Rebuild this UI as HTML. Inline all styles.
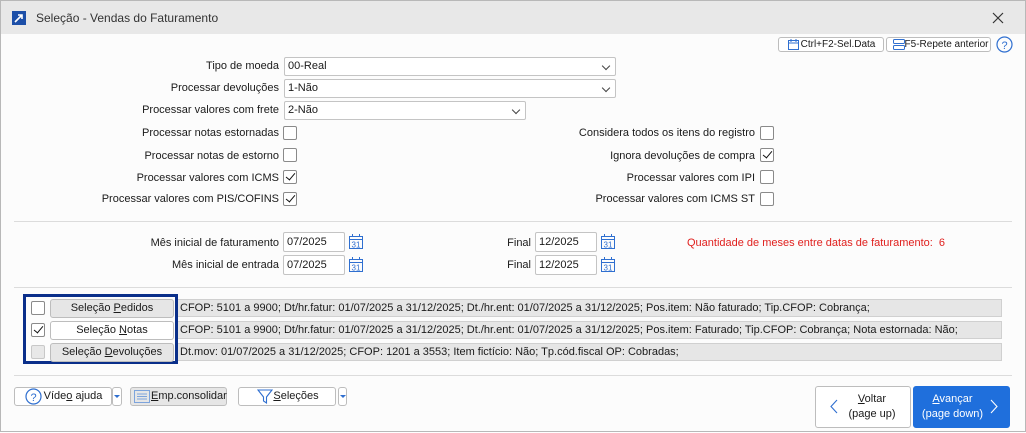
<!DOCTYPE html>
<html><head><meta charset="utf-8"><style>
*{box-sizing:border-box}
body{margin:0;width:1026px;height:433px;overflow:hidden;background:#fff;font-family:"Liberation Sans",sans-serif;font-size:11px;color:#1a1a1a;position:relative}
.a{position:absolute}
.win{left:0;top:0;width:1026px;height:432px;border:1px solid #b8b8b8;background:#fcfcfc}
.tb{left:1px;top:1px;width:1024px;height:33px;background:#e8e8e8}
.lbl{position:absolute;text-align:right;white-space:nowrap;line-height:20px}
.sel{position:absolute;height:19px;border:1px solid #c4c4c4;background:#fff;padding-left:3px;line-height:17px;border-radius:2px}
.sel:after{content:"";position:absolute;right:6px;top:5px;width:5px;height:5px;border-right:1.3px solid #444;border-bottom:1.3px solid #444;transform:rotate(45deg)}
.cb{position:absolute;width:14px;height:14px;border:1px solid #8a8a8a;border-radius:2px;background:#fff}
.cb.k:after{content:"";position:absolute;left:4px;top:0px;width:4px;height:8px;border-right:1.6px solid #111;border-bottom:1.6px solid #111;transform:rotate(40deg)}
.inp{position:absolute;height:20px;width:62px;border:1px solid #c4c4c4;background:#fff;padding-left:3px;line-height:18px;border-radius:2px}
.hr{position:absolute;height:1px;background:#dcdcdc}
.btn{position:absolute;border:1px solid #bdbdbd;border-radius:3px;background:#fff;text-align:center;line-height:16px;white-space:nowrap}
.bar{position:absolute;left:177px;width:825px;height:18px;background:#e6e6e6;border:1px solid #d0d0d0;padding-left:2px;line-height:16px;white-space:nowrap;overflow:hidden}
u{text-decoration:underline}
</style></head><body>
<div class="a win"></div>
<div class="a tb"></div>
<div class="a" style="left:12px;top:11px;width:14px;height:14px;background:#1c4fa8"><svg width="14" height="14"><path d="M3 11 L10 4 M6 4 H10 V8" stroke="#fff" stroke-width="1.6" fill="none"/></svg></div>
<div class="a" style="left:36px;top:11px;font-size:12px;color:#333">Seleção - Vendas do Faturamento</div>
<svg class="a" style="left:992px;top:12px" width="12" height="12"><path d="M1 1L11 11M11 1L1 11" stroke="#333" stroke-width="1.2"/></svg>

<div class="btn" style="left:778px;top:37px;width:106px;height:15px;line-height:13px;font-size:10px;padding-left:14px">Ctrl+F2-Sel.Data</div>
<svg class="a" style="left:788px;top:39px" width="11" height="11"><rect x="0.5" y="1.5" width="10" height="9" fill="none" stroke="#2f6fd0"/><path d="M0.5 4H10.5M3 0V3M8 0V3" stroke="#2f6fd0"/></svg>
<div class="btn" style="left:886px;top:37px;width:105px;height:15px;line-height:13px;font-size:10px;padding-left:16px">F5-Repete anterior</div>
<svg class="a" style="left:893px;top:39px" width="12" height="11"><rect x="0.5" y="0.5" width="11" height="4" rx="1" fill="none" stroke="#2f6fd0"/><rect x="0.5" y="6.5" width="11" height="4" rx="1" fill="none" stroke="#2f6fd0"/></svg>
<svg class="a" style="left:996px;top:36px" width="17" height="17"><circle cx="8.5" cy="8.5" r="7.5" fill="none" stroke="#2f6fd0" stroke-width="1.2"/><text x="8.5" y="13" font-size="11" text-anchor="middle" fill="#2f6fd0" font-family="Liberation Sans">?</text></svg>

<div class="lbl" style="right:747px;top:56px">Tipo de moeda</div>
<div class="sel" style="left:284px;top:57px;width:332px">00-Real</div>
<div class="lbl" style="right:747px;top:78px">Processar devoluções</div>
<div class="sel" style="left:284px;top:79px;width:332px">1-Não</div>
<div class="lbl" style="right:747px;top:100px">Processar valores com frete</div>
<div class="sel" style="left:284px;top:101px;width:242px">2-Não</div>

<div class="lbl" style="right:747px;top:123px">Processar notas estornadas</div><div class="cb" style="left:283px;top:126px"></div>
<div class="lbl" style="right:747px;top:146px">Processar notas de estorno</div><div class="cb" style="left:283px;top:148px"></div>
<div class="lbl" style="right:747px;top:168px">Processar valores com ICMS</div><div class="cb k" style="left:283px;top:170px"></div>
<div class="lbl" style="right:747px;top:189px">Processar valores com PIS/COFINS</div><div class="cb k" style="left:283px;top:192px"></div>

<div class="lbl" style="right:271px;top:123px">Considera todos os itens do registro</div><div class="cb" style="left:760px;top:126px"></div>
<div class="lbl" style="right:271px;top:146px">Ignora devoluções de compra</div><div class="cb k" style="left:760px;top:148px"></div>
<div class="lbl" style="right:271px;top:168px">Processar valores com IPI</div><div class="cb" style="left:760px;top:170px"></div>
<div class="lbl" style="right:271px;top:189px">Processar valores com ICMS ST</div><div class="cb" style="left:760px;top:192px"></div>

<div class="hr" style="left:14px;top:221px;width:998px"></div>

<div class="lbl" style="right:747px;top:233px">Mês inicial de faturamento</div><div class="inp" style="left:283px;top:232px">07/2025</div>
<div class="lbl" style="right:747px;top:255px">Mês inicial de entrada</div><div class="inp" style="left:283px;top:255px">07/2025</div>
<div class="lbl" style="right:495px;top:233px">Final</div><div class="inp" style="left:535px;top:232px">12/2025</div>
<div class="lbl" style="right:495px;top:255px">Final</div><div class="inp" style="left:535px;top:255px">12/2025</div>
<svg class="a" style="left:349px;top:234px" width="14" height="15"><rect x="0.5" y="2.5" width="13" height="12" fill="none" stroke="#2f6fd0"/><path d="M0.5 5.5H13.5M3.5 0V3M10.5 0V3" stroke="#2f6fd0"/><text x="7" y="13.5" font-size="8" text-anchor="middle" fill="#2f6fd0" font-family="Liberation Sans">31</text></svg>
<svg class="a" style="left:349px;top:257px" width="14" height="15"><rect x="0.5" y="2.5" width="13" height="12" fill="none" stroke="#2f6fd0"/><path d="M0.5 5.5H13.5M3.5 0V3M10.5 0V3" stroke="#2f6fd0"/><text x="7" y="13.5" font-size="8" text-anchor="middle" fill="#2f6fd0" font-family="Liberation Sans">31</text></svg>
<svg class="a" style="left:601px;top:234px" width="14" height="15"><rect x="0.5" y="2.5" width="13" height="12" fill="none" stroke="#2f6fd0"/><path d="M0.5 5.5H13.5M3.5 0V3M10.5 0V3" stroke="#2f6fd0"/><text x="7" y="13.5" font-size="8" text-anchor="middle" fill="#2f6fd0" font-family="Liberation Sans">31</text></svg>
<svg class="a" style="left:601px;top:257px" width="14" height="15"><rect x="0.5" y="2.5" width="13" height="12" fill="none" stroke="#2f6fd0"/><path d="M0.5 5.5H13.5M3.5 0V3M10.5 0V3" stroke="#2f6fd0"/><text x="7" y="13.5" font-size="8" text-anchor="middle" fill="#2f6fd0" font-family="Liberation Sans">31</text></svg>
<div class="lbl" style="left:687px;top:233px;color:#e0201e">Quantidade de meses entre datas de faturamento:&nbsp; 6</div>

<div class="hr" style="left:14px;top:287px;width:998px"></div>
<div class="bar" style="top:299px">CFOP: 5101 a 9900; Dt/hr.fatur: 01/07/2025 a 31/12/2025; Dt./hr.ent: 01/07/2025 a 31/12/2025; Pos.item: Não faturado; Tip.CFOP: Cobrança;</div>
<div class="bar" style="top:321px">CFOP: 5101 a 9900; Dt/hr.fatur: 01/07/2025 a 31/12/2025; Dt./hr.ent: 01/07/2025 a 31/12/2025; Pos.item: Faturado; Tip.CFOP: Cobrança; Nota estornada: Não;</div>
<div class="bar" style="top:343px">Dt.mov: 01/07/2025 a 31/12/2025; CFOP: 1201 a 3553; Item fictício: Não; Tp.cód.fiscal OP: Cobradas;</div>
<div class="a" style="left:23px;top:294px;width:155px;height:70px;border:3px solid #0a2f8a"></div>
<div class="cb" style="left:31px;top:301px"></div>
<div class="btn" style="left:50px;top:299px;width:124px;height:19px;background:#e6e6e6">Seleção <u>P</u>edidos</div>
<div class="cb k" style="left:31px;top:323px"></div>
<div class="btn" style="left:50px;top:321px;width:124px;height:19px">Seleção <u>N</u>otas</div>
<div class="cb" style="left:31px;top:345px;background:#e8e8e8;border-color:#c8c8c8"></div>
<div class="btn" style="left:50px;top:343px;width:124px;height:19px;background:#e6e6e6">Seleção <u>D</u>evoluções</div>

<div class="hr" style="left:14px;top:375px;width:998px"></div>
<div class="btn" style="left:14px;top:387px;width:98px;height:19px;padding-left:20px">Víde<u>o</u> ajuda</div>
<svg class="a" style="left:25px;top:388px" width="17" height="17"><circle cx="8.5" cy="8.5" r="7.5" fill="none" stroke="#2f6fd0" stroke-width="1.2"/><text x="8.5" y="13" font-size="11" text-anchor="middle" fill="#2f6fd0" font-family="Liberation Sans">?</text></svg>
<div class="btn" style="left:112px;top:387px;width:10px;height:19px"><div style="margin:7px auto 0;width:0;height:0;border-left:3px solid transparent;border-right:3px solid transparent;border-top:3px solid #2f6fd0"></div></div>
<div class="btn" style="left:130px;top:387px;width:97px;height:19px;background:#e6e6e6;padding-left:20px"><u>E</u>mp.consolidar</div>
<svg class="a" style="left:134px;top:390px" width="16" height="13"><rect x="0.5" y="0.5" width="15" height="12" fill="none" stroke="#7da4dc"/><path d="M3 4H13M3 6.5H13M3 9H13" stroke="#7da4dc"/></svg>
<div class="btn" style="left:238px;top:387px;width:98px;height:19px;padding-left:18px"><u>S</u>eleções</div>
<svg class="a" style="left:257px;top:388px" width="16" height="17"><path d="M1 2H15L9.5 9V15L6.5 13V9Z" fill="none" stroke="#2f6fd0" stroke-width="1.1"/></svg>
<div class="btn" style="left:338px;top:387px;width:9px;height:19px"><div style="margin:7px auto 0;width:0;height:0;border-left:3px solid transparent;border-right:3px solid transparent;border-top:3px solid #2f6fd0"></div></div>

<div class="btn" style="left:815px;top:386px;width:96px;height:42px;padding:5px 0 0 18px;line-height:15px"><u>V</u>oltar<br>(page up)</div>
<svg class="a" style="left:830px;top:399px" width="8" height="15"><path d="M7 1L1 7.5L7 14" fill="none" stroke="#2f6fd0" stroke-width="1.1"/></svg>
<div class="btn" style="left:913px;top:386px;width:97px;height:42px;background:#1f6fdc;border-color:#1f6fdc;color:#fff;padding:5px 18px 0 0;line-height:15px"><u>A</u>vançar<br>(page down)</div>
<svg class="a" style="left:990px;top:399px" width="8" height="15"><path d="M1 1L7 7.5L1 14" fill="none" stroke="#fff" stroke-width="1.1"/></svg>
</body></html>
